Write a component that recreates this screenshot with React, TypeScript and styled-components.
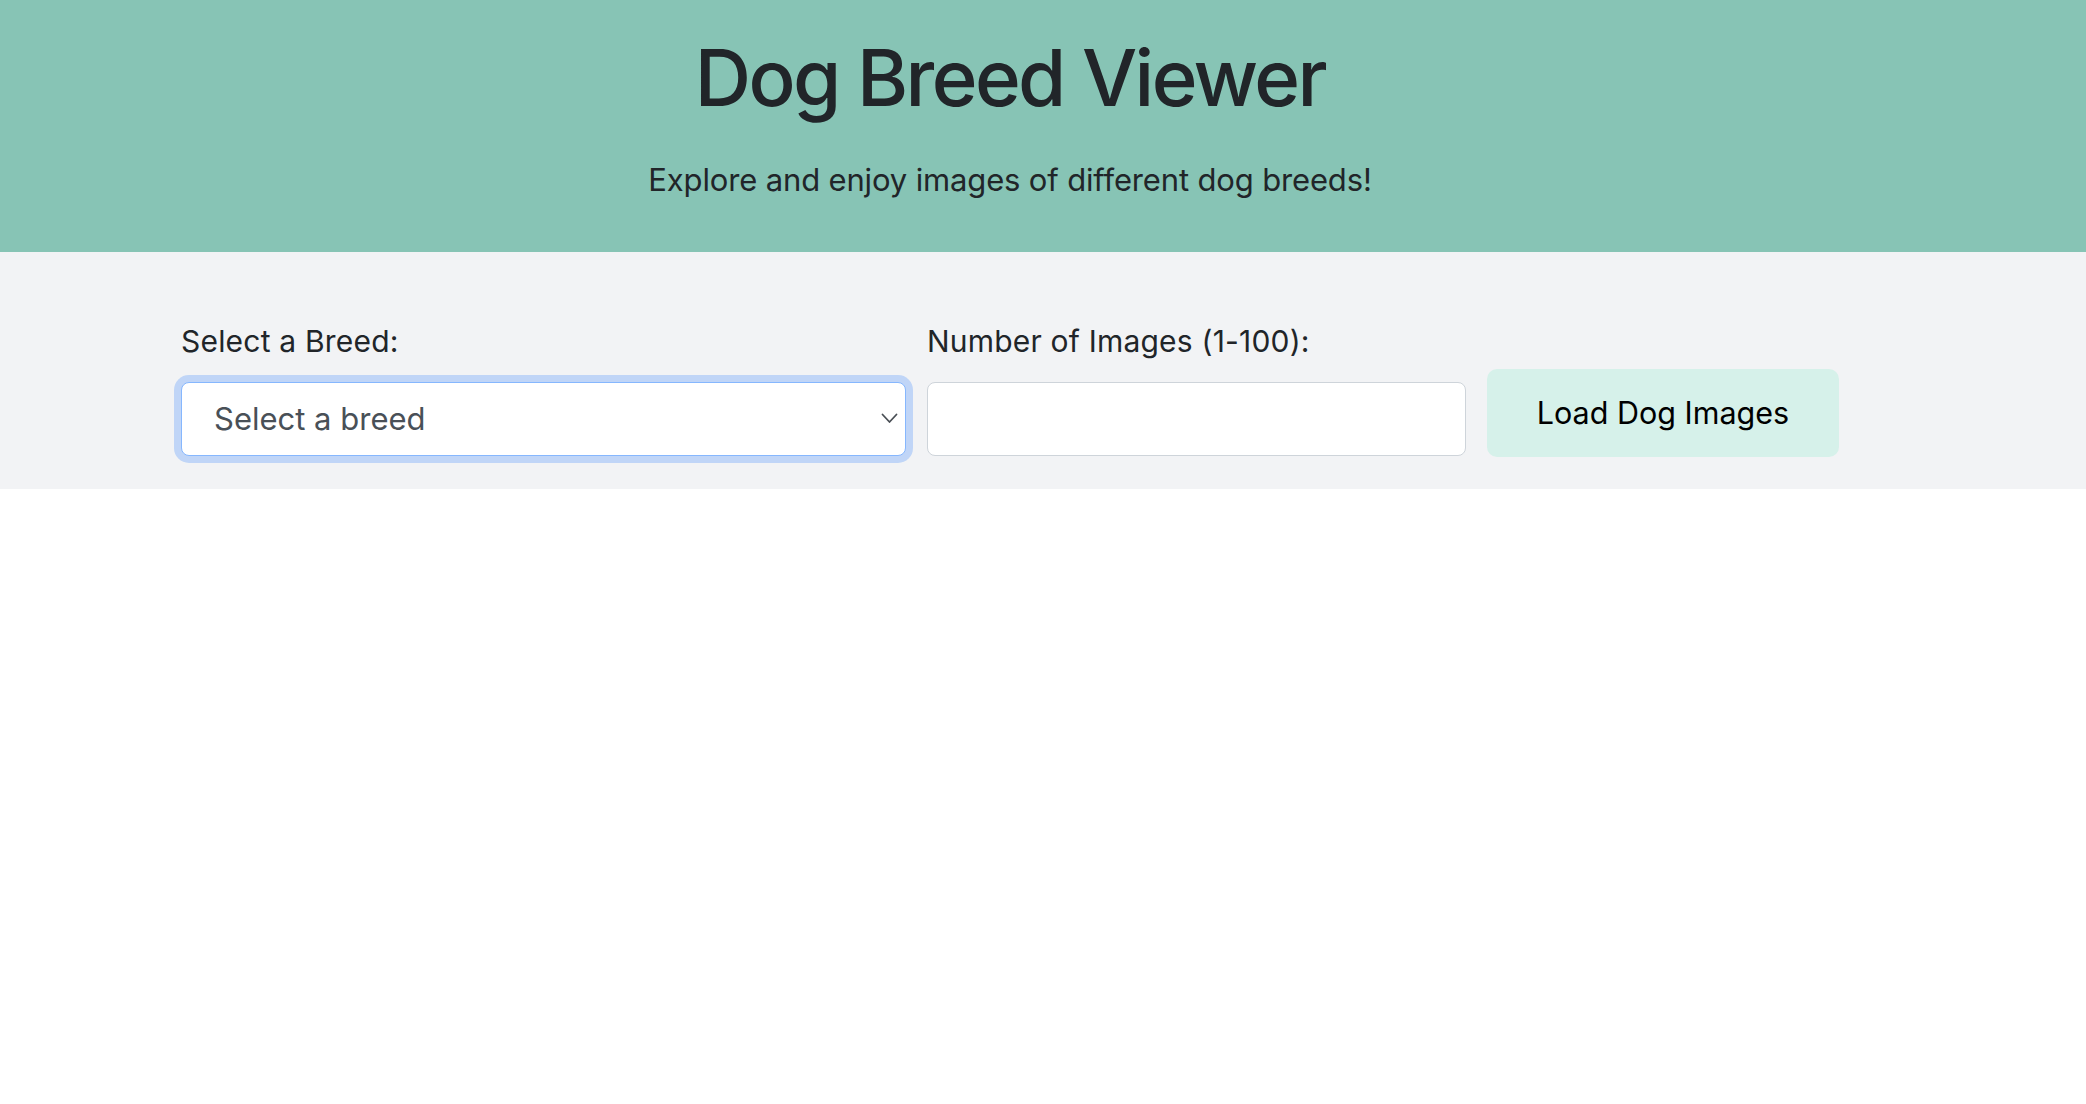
import React, { useState } from "react";
import styled, { createGlobalStyle } from "styled-components";

const GlobalStyle = createGlobalStyle`
  html, body {
    margin: 0;
    padding: 0;
    background: #ffffff;
  }
  body {
    font-family: Inter, "Noto Sans", "Liberation Sans", sans-serif;
    color: #212529;
  }
  * {
    box-sizing: border-box;
  }
`;

const Header = styled.header`
  background-color: #87c4b5;
  padding: 31px 0 48.5px;
`;

const Container = styled.div`
  width: 1658px;
  margin-left: 181px;
`;

const Title = styled.h1`
  margin: 0;
  text-align: center;
  font-size: 78px;
  font-weight: 500;
  line-height: 1.2;
  letter-spacing: -2.6px;
  color: #212529;
`;

const Subtitle = styled.p`
  margin: 32px 0 0;
  text-align: center;
  font-size: 31px;
  line-height: 1.5;
  letter-spacing: -0.15px;
  color: #212529;
`;

const Controls = styled.section`
  background-color: #f2f3f5;
  padding: 67px 0 33px;
`;

const Row = styled.div`
  display: flex;
  align-items: flex-end;
  gap: 21px;
`;

const Field = styled.div<{ $width: number }>`
  display: flex;
  flex-direction: column;
  width: ${(p) => p.$width}px;
`;

const Label = styled.label`
  font-size: 30px;
  line-height: 1.5;
  letter-spacing: 0.2px;
  margin-bottom: 18px;
  color: #212529;
`;

const SelectWrap = styled.div`
  position: relative;
`;

const Select = styled.select`
  appearance: none;
  width: 100%;
  height: 74px;
  padding: 0 60px 0 32px;
  font-family: inherit;
  font-size: 31px;
  color: #495057;
  background: #ffffff;
  border: 1.5px solid #86b7fe;
  border-radius: 8px;
  box-shadow: 0 0 0 7px rgba(13, 110, 253, 0.22);
  outline: none;
`;

const Chevron = styled.svg`
  position: absolute;
  right: 8px;
  top: 31px;
  width: 17px;
  height: 11px;
  pointer-events: none;
`;

const Input = styled.input`
  width: 100%;
  height: 74px;
  padding: 0 32px;
  font-family: inherit;
  font-size: 31px;
  color: #212529;
  background: #ffffff;
  border: 1.5px solid #ced4da;
  border-radius: 8px;
  outline: none;
`;

const Button = styled.button`
  width: 352px;
  height: 88px;
  margin-bottom: -1px;
  border: none;
  border-radius: 10px;
  background-color: #d6f1ea;
  color: #000000;
  font-family: inherit;
  font-size: 30.5px;
  cursor: pointer;
`;

const Gallery = styled.main`
  min-height: 612px;
  background: #ffffff;
`;

export default function App() {
  const [breed, setBreed] = useState("");
  const [count, setCount] = useState("");

  return (
    <>
      <GlobalStyle />
      <Header>
        <Container>
          <Title>Dog Breed Viewer</Title>
          <Subtitle>Explore and enjoy images of different dog breeds!</Subtitle>
        </Container>
      </Header>
      <Controls>
        <Container>
          <Row>
            <Field $width={725}>
              <Label htmlFor="breed">Select a Breed:</Label>
              <SelectWrap>
                <Select
                  id="breed"
                  value={breed}
                  onChange={(e) => setBreed(e.target.value)}
                >
                  <option value="">Select a breed</option>
                </Select>
                <Chevron viewBox="0 0 17 11" fill="none">
                  <path
                    d="M1.5 1.5 L8.5 9 L15.5 1.5"
                    stroke="#4a4f55"
                    strokeWidth="1.8"
                    strokeLinecap="round"
                    strokeLinejoin="round"
                  />
                </Chevron>
              </SelectWrap>
            </Field>
            <Field $width={539}>
              <Label htmlFor="count">Number of Images (1-100):</Label>
              <Input
                id="count"
                type="number"
                min={1}
                max={100}
                value={count}
                onChange={(e) => setCount(e.target.value)}
              />
            </Field>
            <Button type="button">Load Dog Images</Button>
          </Row>
        </Container>
      </Controls>
      <Gallery />
    </>
  );
}
